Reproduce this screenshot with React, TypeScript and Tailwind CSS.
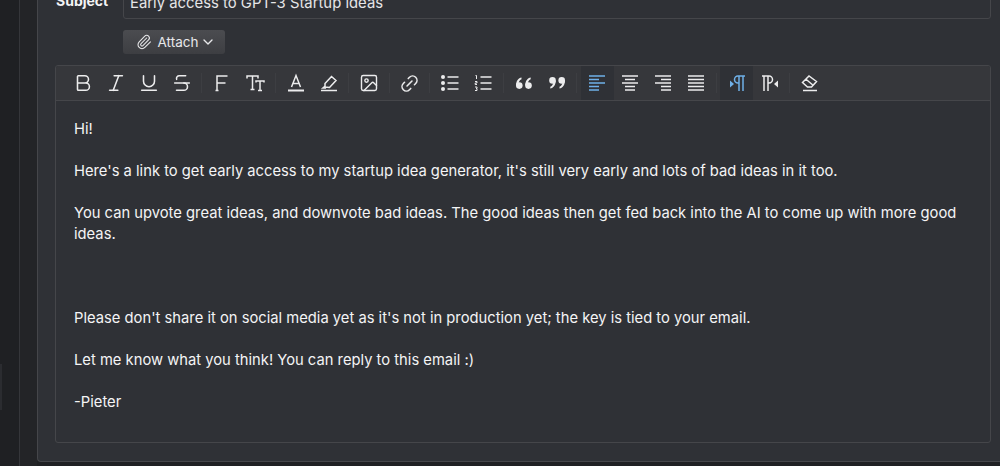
import React from "react";
import { Bold, Italic, Underline, Strikethrough, Image, Link2, Paperclip, ChevronDown } from "lucide-react";

const S = { className: "w-[22px] h-[22px]", strokeWidth: 1.7 };

const Svg = ({ children }: { children: React.ReactNode }) => (
  <svg viewBox="0 0 20 20" fill="none" stroke="currentColor" strokeWidth={1.5} className="w-5 h-5">
    {children}
  </svg>
);

const FontIcon = () => (
  <Svg>
    <path d="M5 17.500V3h10.500M5 10h8.500M3.500 17.500h3" />
  </Svg>
);

const SizeIcon = () => (
  <Svg>
    <path d="M2 5.500v-2.500h11v2.500M7.500 3v13.500M5.500 16.500h4M11 9.500v-1.500h8v1.500M15 8v9.500M13 17.500h4" />
  </Svg>
);

const ColorIcon = () => (
  <Svg>
    <path d="M5.500 14 10 2.500 14.500 14M7 10.500h6" />
    <path d="M2 17.500h16" strokeWidth={2} />
  </Svg>
);

const HighlightIcon = () => (
  <Svg>
    <path d="m6 10.500 6.500-7 4.500 4-6.500 7-4.500-.500Zm-.4 3.200L4 15h3" />
    <path d="M2 17.500h16" strokeWidth={1.6} />
  </Svg>
);

const ListIcon = () => (
  <Svg>
    <circle cx="3" cy="4" r="2" fill="currentColor" stroke="none" />
    <circle cx="3" cy="10" r="2" fill="currentColor" stroke="none" />
    <circle cx="3" cy="16" r="2" fill="currentColor" stroke="none" />
    <path d="M7.500 4H18.500M7.500 10H18.500M7.500 16H18.500" />
  </Svg>
);

const OrderedIcon = () => (
  <Svg>
    <path d="M2.500 2.500h1V6M2 8.500h2V10H2.200v1.500H4M2 14h2v1.500H3M2 17.500h2V16" strokeWidth={1} />
    <path d="M7.500 4H18.500M7.500 10H18.500M7.500 16H18.500" />
  </Svg>
);

const QuoteOpen = () => (
  <svg viewBox="0 0 20 20" fill="currentColor" className="w-5 h-5">
    <circle cx="5.300" cy="12.600" r="3.300" />
    <circle cx="14.500" cy="12.600" r="3.300" />
    <path d="M2 12.500C2 8 4.500 5 7.500 4.500v1.800C5.500 7 4.500 9 4.500 11.500ZM11.200 12.500c0-4.500 2.500-7.500 5.500-8v1.800c-2 .7-3 2.700-3 5.200Z" />
  </svg>
);

const QuoteClose = () => (
  <svg viewBox="0 0 20 20" fill="currentColor" className="w-5 h-5 rotate-180">
    <circle cx="5.300" cy="12.600" r="3.300" />
    <circle cx="14.500" cy="12.600" r="3.300" />
    <path d="M2 12.500C2 8 4.500 5 7.500 4.500v1.800C5.500 7 4.500 9 4.500 11.500ZM11.200 12.500c0-4.500 2.500-7.500 5.500-8v1.800c-2 .7-3 2.700-3 5.200Z" />
  </svg>
);

// five bars, as in the editor's alignment buttons
const AlignBars = ({ d }: { d: string }) => (
  <svg viewBox="0 0 20 20" fill="none" stroke="currentColor" strokeWidth={1.6} className="w-5 h-5">
    <path d={d} />
  </svg>
);

const LtrIcon = () => (
  <Svg>
    <path d="M18 3H11a3.500 3.500 0 0 0 0 7h1M12 3v15M16 3v15" />
    <path d="m3 7.500 4 3.500-4 3.500Z" fill="currentColor" stroke="none" />
  </Svg>
);

const RtlIcon = () => (
  <Svg>
    <path d="M2 3H9a3.500 3.500 0 0 1 0 7H8M8 3v15M4 3v15" />
    <path d="m18 7.500-4 3.500 4 3.500Z" fill="currentColor" stroke="none" />
  </Svg>
);

const EraserIcon = () => (
  <Svg>
    <path d="m2.500 9.500 6.500-6.500 7.500 5.500-5 5.500H7.500Zm3.500-3.200 6.500 5.500" />
    <path d="M3 17.500h14" strokeWidth={1.6} />
  </Svg>
);

const Btn = ({ active, children }: { active?: boolean; children: React.ReactNode }) => (
  <div
    className={`w-[33px] h-[34px] flex items-center justify-center ${
      active ? "bg-[#2f3136] text-[#6fb0e8]" : "text-[#ececed]"
    }`}
  >
    {children}
  </div>
);

const Sep = () => <div className="w-px h-[20px] mx-[3.25px] bg-[#3d3e42]" />;

export default function App() {
  return (
    <div
      className="flex w-[1000px] h-[466px] overflow-hidden bg-[#1f2023] text-[#f4f4f5]"
      style={{ fontFamily: "Inter, 'Liberation Sans', sans-serif" }}
    >
      {/* Sidebar edges */}
      <div className="w-[19px] shrink-0 flex items-center">
        <div className="w-[2px] h-[46px] mt-[308px] bg-[#2b2c30]" />
      </div>
      <div className="w-[18px] shrink-0 border-l border-[#35363a] bg-[#232427]" />

      {/* Compose panel */}
      <div className="w-[980px] shrink-0 h-[462px] bg-[#2f3136] border-l border-b border-[#45464a] rounded-bl-[4px] pl-[17px] pr-[26px] flex flex-col">
        {/* Subject */}
        <div className="flex items-end h-[18px] shrink-0">
          <div className="ml-px w-[67px] shrink-0 text-[14px] leading-[18px] font-bold -translate-y-[8px]">Subject</div>
          <div className="flex-1 h-[26px] -mb-px border border-[#45464a] rounded-[3px] bg-[#2f3136] pl-[6px] text-[14.85px] leading-[18px] text-[#e6e6e8] whitespace-nowrap">
            Early access to GPT-3 Startup ideas
          </div>
        </div>

        {/* Attach */}
        <div className="pl-[68px] mt-[12px] shrink-0">
          <div className="w-[102px] h-[24px] flex items-center justify-center gap-[6px] pl-[4px] rounded-[3px] bg-gradient-to-b from-[#4b4c50] to-[#3d3e42] text-[13.5px] text-[#e8e8ea]">
            <Paperclip className="w-[16px] h-[16px]" strokeWidth={1.6} />
            <span className="flex items-center gap-[2px]">
              Attach
              <ChevronDown className="w-[16px] h-[16px]" strokeWidth={2} />
            </span>
          </div>
        </div>

        {/* Editor */}
        <div className="mt-[11px] flex-1 mb-[18px] border border-[#45464a] rounded-[3px] flex flex-col overflow-hidden">
          <div className="h-[35px] shrink-0 bg-[#36373b] border-b border-[#45464a] pl-[10px] flex items-center">
            <Btn><Bold {...S} /></Btn>
            <Btn><Italic {...S} /></Btn>
            <Btn><Underline {...S} /></Btn>
            <Btn><Strikethrough {...S} /></Btn>
            <Sep />
            <Btn><FontIcon /></Btn>
            <Btn><SizeIcon /></Btn>
            <Sep />
            <Btn><ColorIcon /></Btn>
            <Btn><HighlightIcon /></Btn>
            <Sep />
            <Btn><Image className="w-5 h-5" strokeWidth={1.7} /></Btn>
            <Sep />
            <Btn><Link2 className="w-[21px] h-[21px] -rotate-45" strokeWidth={1.8} /></Btn>
            <Sep />
            <Btn><ListIcon /></Btn>
            <Btn><OrderedIcon /></Btn>
            <Sep />
            <Btn><QuoteOpen /></Btn>
            <Btn><QuoteClose /></Btn>
            <Sep />
            <Btn active><AlignBars d="M2 3h16M2 6.500h10M2 10h16M2 13.500h10M2 17h10" /></Btn>
            <Btn><AlignBars d="M2 3h16M5 6.500h10M2 10h16M5 13.500h10M5 17h10" /></Btn>
            <Btn><AlignBars d="M2 3h16M8 6.500h10M2 10h16M8 13.500h10M8 17h10" /></Btn>
            <Btn><AlignBars d="M2 3h16M2 6.500h16M2 10h16M2 13.500h16M2 17h16" /></Btn>
            <Sep />
            <Btn active><LtrIcon /></Btn>
            <Btn><RtlIcon /></Btn>
            <Sep />
            <Btn><EraserIcon /></Btn>
          </div>
          <div className="flex-1 pl-[18px] pr-[17px] pt-[18px] text-[14.75px] leading-[21px]">
            <p>Hi!</p>
            <br />
            <p>Here's a link to get early access to my startup idea generator, it's still very early and lots of bad ideas in it too.</p>
            <br />
            <p>You can upvote great ideas, and downvote bad ideas. The good ideas then get fed back into the AI to come up with more good ideas.</p>
            <br />
            <br />
            <br />
            <p>Please don't share it on social media yet as it's not in production yet; the key is tied to your email.</p>
            <br />
            <p>Let me know what you think! You can reply to this email :)</p>
            <br />
            <p>-Pieter</p>
          </div>
        </div>
      </div>
    </div>
  );
}
